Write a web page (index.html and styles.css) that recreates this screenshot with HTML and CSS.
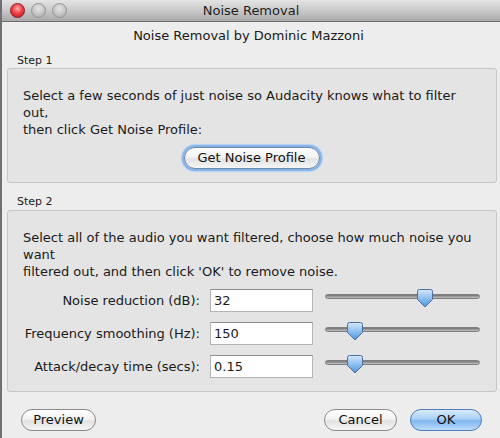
FILE: index.html
```html
<!DOCTYPE html>
<html>
<head>
<meta charset="utf-8">
<link rel="stylesheet" href="styles.css">
</head>
<body>
<div class="window">
  <div class="titlebar">
    <div class="lights">
      <span class="light red"></span>
      <span class="light gray"></span>
      <span class="light gray"></span>
    </div>
    <div class="title">Noise Removal</div>
  </div>
  <div class="content">
    <div class="heading">Noise Removal by Dominic Mazzoni</div>

    <div class="legend">Step 1</div>
    <div class="box box1">
      <div class="para">Select a few seconds of just noise so Audacity knows what to filter<br>out,<br>then click Get Noise Profile:</div>
      <div class="center"><button class="btn focus">Get Noise Profile</button></div>
    </div>

    <div class="legend legend2">Step 2</div>
    <div class="box box2">
      <div class="para">Select all of the audio you want filtered, choose how much noise you<br>want<br>filtered out, and then click 'OK' to remove noise.</div>
      <div class="rows">
        <div class="label">Noise reduction (dB):</div>
        <div class="field">32</div>
        <div class="slider"><div class="track"></div><svg class="thumb" style="left:92px" width="16" height="19" viewBox="0 0 16 19"><defs><linearGradient id="tg1" x1="0" y1="0" x2="0" y2="1"><stop offset="0" stop-color="#d6e8fb"/><stop offset="0.5" stop-color="#8ebff0"/><stop offset="1" stop-color="#4f93e0"/></linearGradient></defs><path d="M2.5,0.5 H13.5 Q15.5,0.5 15.5,2.5 V10.5 L8,18 L0.5,10.5 V2.5 Q0.5,0.5 2.5,0.5 Z" fill="url(#tg1)" stroke="#4c6f9c" stroke-width="1"/></svg></div>

        <div class="label">Frequency smoothing (Hz):</div>
        <div class="field">150</div>
        <div class="slider"><div class="track"></div><svg class="thumb" style="left:22px" width="16" height="19" viewBox="0 0 16 19"><defs><linearGradient id="tg2" x1="0" y1="0" x2="0" y2="1"><stop offset="0" stop-color="#d6e8fb"/><stop offset="0.5" stop-color="#8ebff0"/><stop offset="1" stop-color="#4f93e0"/></linearGradient></defs><path d="M2.5,0.5 H13.5 Q15.5,0.5 15.5,2.5 V10.5 L8,18 L0.5,10.5 V2.5 Q0.5,0.5 2.5,0.5 Z" fill="url(#tg2)" stroke="#4c6f9c" stroke-width="1"/></svg></div>

        <div class="label">Attack/decay time (secs):</div>
        <div class="field">0.15</div>
        <div class="slider"><div class="track"></div><svg class="thumb" style="left:22px" width="16" height="19" viewBox="0 0 16 19"><defs><linearGradient id="tg3" x1="0" y1="0" x2="0" y2="1"><stop offset="0" stop-color="#d6e8fb"/><stop offset="0.5" stop-color="#8ebff0"/><stop offset="1" stop-color="#4f93e0"/></linearGradient></defs><path d="M2.5,0.5 H13.5 Q15.5,0.5 15.5,2.5 V10.5 L8,18 L0.5,10.5 V2.5 Q0.5,0.5 2.5,0.5 Z" fill="url(#tg3)" stroke="#4c6f9c" stroke-width="1"/></svg></div>
      </div>
    </div>

    <div class="footer">
      <button class="btn preview">Preview</button>
      <div class="spacer"></div>
      <button class="btn cancel">Cancel</button>
      <button class="btn ok">OK</button>
    </div>
  </div>
</div>
</body>
</html>
```
FILE: styles.css
```css
html, body {
  margin: 0;
  padding: 0;
  background: #ededed;
}
body {
  width: 500px;
  height: 438px;
  overflow: hidden;
  font-family: "DejaVu Sans", sans-serif;
  font-size: 13px;
  color: #1a1a1a;
}
.window {
  height: 438px;
  border-left: 2px solid #707070;
  box-sizing: border-box;
  display: flex;
  flex-direction: column;
}
.titlebar {
  height: 21px;
  border-bottom: 1px solid #6f6f6f;
  background: linear-gradient(#e4e4e4, #cfcfcf 40%, #a9a9a9);
  position: relative;
  display: flex;
  align-items: center;
  justify-content: center;
}
.lights {
  position: absolute;
  left: 8px;
  top: 3px;
  display: flex;
  gap: 6px;
}
.light {
  width: 15px;
  height: 15px;
  border-radius: 50%;
  box-sizing: border-box;
}
.light.red {
  background: radial-gradient(circle at 50% 35%, #ffb0a8 0%, #f0424a 45%, #b3111c 100%);
  border: 1px solid #8d1a1f;
}
.light.gray {
  background: radial-gradient(circle at 50% 35%, #e6e6e6 0%, #c4c4c4 55%, #a6a6a6 100%);
  border: 1px solid #949494;
}
.title {
  font-size: 13px;
  color: #1e1e1e;
}
.content {
  flex: 1;
  display: flex;
  flex-direction: column;
  padding: 5px 3px 0 5px;
}
.heading {
  text-align: center;
  line-height: 17px;
  height: 17px;
  margin-left: -7px;
}
.legend {
  font-size: 11px;
  line-height: 14px;
  margin-top: 10px;
  padding-left: 10px;
  color: #222;
}
.legend2 {
  margin-top: 12px;
}
.box {
  background: #e4e4e4;
  border: 1px solid #c6c6c6;
  border-radius: 3px;
  padding: 18px 10px 0 15px;
}
.box1 {
  height: 115px;
  box-sizing: border-box;
}
.box2 {
  height: 182px;
  box-sizing: border-box;
  margin-top: 1px;
}
.para {
  line-height: 17px;
}
.center {
  display: flex;
  justify-content: center;
  margin-top: 9px;
  padding-right: 6px;
}
.btn {
  font-family: "DejaVu Sans", sans-serif;
  font-size: 13px;
  color: #111;
  height: 22px;
  border-radius: 11px;
  border: 1px solid #8a8a8a;
  background: linear-gradient(#ffffff, #f3f3f3 45%, #e2e2e2 55%, #f6f6f6);
  padding: 0;
  box-sizing: border-box;
  line-height: 20px;
  white-space: nowrap;
  text-align: center;
}
.btn.focus {
  width: 136px;
  box-shadow: 0 0 0 2px #86b3e8, 0 0 1px 3px #b6d2f2;
  border-color: #6f89aa;
}
.rows {
  display: grid;
  grid-template-columns: 177px 103px 155px;
  column-gap: 10px;
  row-gap: 10px;
  margin-top: 9px;
}
.rows .slider {
  margin-left: 2px;
}
.label {
  text-align: right;
  line-height: 23px;
  height: 23px;
}
.field {
  height: 23px;
  box-sizing: border-box;
  background: #fff;
  border: 1px solid #b4b4b4;
  border-top-color: #8e8e8e;
  padding-left: 3px;
  line-height: 21px;
}
.slider {
  position: relative;
  height: 23px;
}
.track {
  position: absolute;
  left: 0;
  right: -2px;
  top: 5px;
  height: 5px;
  border-radius: 3px;
  background: linear-gradient(#6f6f6f, #9c9c9c 50%, #c0c0c0);
  border: 1px solid #808080;
  box-sizing: border-box;
}
.thumb {
  position: absolute;
  top: 0;
}
.footer {
  display: flex;
  align-items: center;
  margin-top: 17px;
  padding-left: 14px;
  padding-right: 15px;
}
.spacer {
  flex: 1;
}
.btn.preview {
  width: 75px;
}
.btn.cancel {
  width: 73px;
  margin-right: 13px;
}
.btn.ok {
  width: 72px;
  border-color: #4f7cb8;
  background: linear-gradient(#d9ebfc, #a9cff5 45%, #7fb6ef 55%, #bcdcfa);
}
```
